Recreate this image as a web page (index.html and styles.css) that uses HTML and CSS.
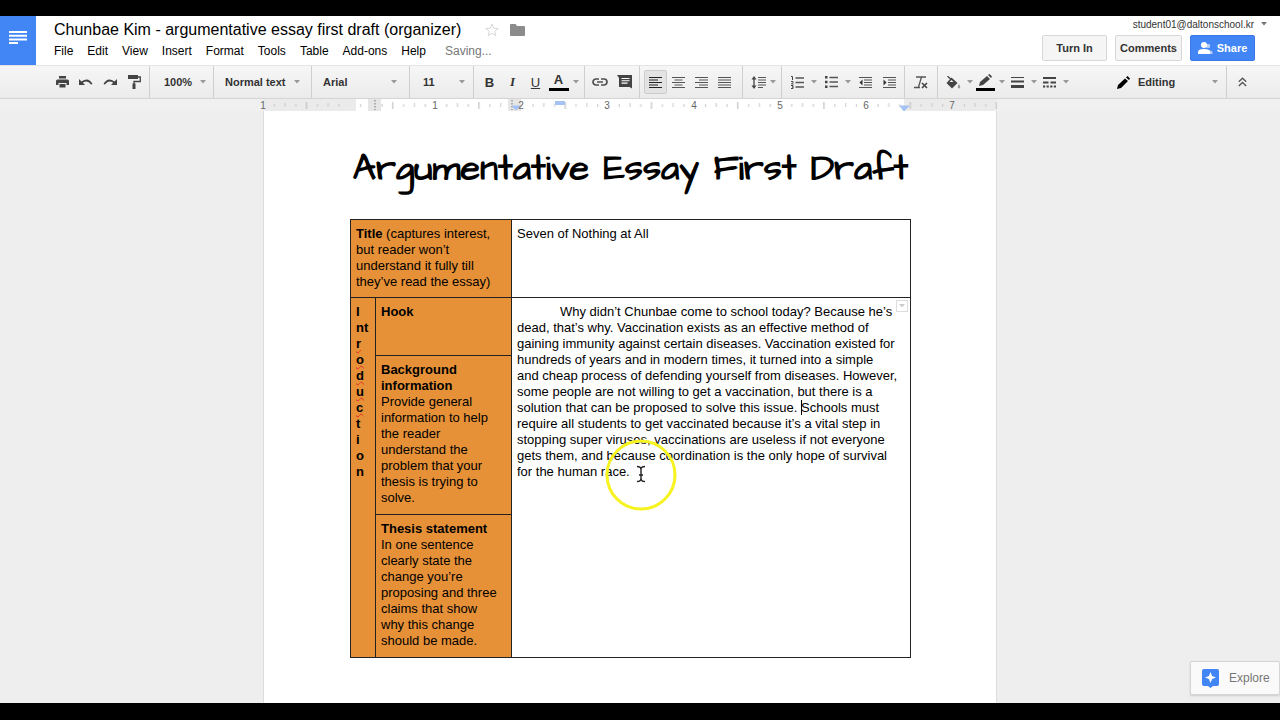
FILE: index.html
```html
<!DOCTYPE html>
<html lang="en">
<head>
<meta charset="utf-8">
<title>Chunbae Kim - argumentative essay first draft (organizer)</title>
<link rel="stylesheet" href="styles.css">
</head>
<body>
<svg class="defs" aria-hidden="true">
  <symbol id="caret" viewBox="0 0 6 4"><path d="M0 0h6L3 3.500z"/></symbol>
  <pattern id="ticks" width="86.250" height="12" patternUnits="userSpaceOnUse">
    <path d="M11.300 5v3M22 4v4M32.800 5v3M54.400 5v3M65.200 4v4M76 5v3" stroke="#c9c9c9"/>
    <path d="M43.500 3v7" stroke="#b5b5b5"/>
  </pattern>
</svg>
<div class="app">
  <header class="header">
    <a class="logo" href="#" aria-label="Docs home">
      <svg width="18" height="14" viewBox="0 0 18 14"><path d="M0 1h18M0 4.700h18M0 8.400h18M0 12.100h9" stroke="#fff" stroke-width="2"/></svg>
    </a>
    <div class="heading">
      <div class="title-row">
        <h1 class="doc-title">Chunbae Kim - argumentative essay first draft (organizer)</h1>
        <button class="plain star" aria-label="Star"><svg width="14" height="14" viewBox="0 0 14 14"><path d="M7 1l1.700 4.200 4.500.3-3.500 2.800 1.200 4.400L7 10.300l-3.900 2.400 1.200-4.400L.8 5.500l4.500-.3z" fill="none" stroke="#d8d8d8"/></svg></button>
        <button class="plain" aria-label="Folder"><svg width="15" height="12" viewBox="0 0 15 12"><path d="M0 1q0-1 1-1h4.500L7 2h7q1 0 1 1v8q0 1-1 1H1q-1 0-1-1z" fill="#8b8b8b"/></svg></button>
      </div>
      <nav class="menu">
        <button>File</button><button>Edit</button><button>View</button><button>Insert</button><button>Format</button><button>Tools</button><button>Table</button><button>Add-ons</button><button>Help</button>
        <span class="saving">Saving...</span>
      </nav>
    </div>
    <div class="account">
      <button class="plain email">student01@daltonschool.kr <svg class="caret" width="6" height="4"><use href="#caret"/></svg></button>
      <div class="actions">
        <button class="action turn">Turn In</button>
        <button class="action comments">Comments</button>
        <button class="action share"><svg width="15" height="12" viewBox="0 0 15 12"><circle cx="10" cy="4" r="2.300" fill="#b5cdf9"/><path d="M8 12V8.500q6-1 6.500 2V12z" fill="#b5cdf9"/><circle cx="6" cy="3" r="3" fill="#fff"/><path d="M0 12v-2q0-3 6-3t6 3v2z" fill="#fff"/></svg>Share</button>
      </div>
    </div>
  </header>

  <div class="toolbar" role="toolbar" aria-label="Formatting">
    <div class="group first">
      <button class="tool" aria-label="Print"><svg width="13" height="12" viewBox="0 0 13 12"><path d="M3 0h7v2.500H3zM1.500 3.500h10Q13 3.500 13 5v4h-2.500V7h-8v2H0V5q0-1.500 1.500-1.500zM3.500 8h6v3.500h-6z" fill="#444"/></svg></button>
      <button class="tool" aria-label="Undo"><svg width="14" height="8" viewBox="0 0 14 8"><path d="M0 1v6h6L3.800 4.800Q8.500 1.500 12 6.500l1.500-.5Q9.500-1.500 2.500 3.500z" fill="#444"/></svg></button>
      <button class="tool" aria-label="Redo"><svg width="14" height="8" viewBox="0 0 14 8"><path d="M14 1v6H8l2.200-2.200Q5.500 1.500 2 6.500L.5 6Q4.500-1.500 11.500 3.500z" fill="#444"/></svg></button>
      <button class="tool" aria-label="Paint format"><svg width="13" height="14" viewBox="0 0 13 14"><path d="M0 0h10v4H0z" fill="#444"/><path d="M10 2h2.300v4.500H6V9" fill="none" stroke="#444" stroke-width="1.300"/><path d="M4.500 8.500h3V14h-3z" fill="#444"/></svg></button>
    </div>
    <label class="group pick zoom"><select aria-label="Zoom"><option>100%</option></select><svg class="caret" width="6" height="4"><use href="#caret"/></svg></label>
    <label class="group pick style"><select aria-label="Styles"><option>Normal text</option></select><svg class="caret" width="6" height="4"><use href="#caret"/></svg></label>
    <label class="group pick font"><select aria-label="Font"><option>Arial</option></select><svg class="caret" width="6" height="4"><use href="#caret"/></svg></label>
    <label class="group pick size"><select aria-label="Font size"><option>11</option></select><svg class="caret" width="6" height="4"><use href="#caret"/></svg></label>
    <div class="group text">
      <button class="tool bold" aria-label="Bold">B</button>
      <button class="tool italic" aria-label="Italic">I</button>
      <button class="tool underline" aria-label="Underline">U</button>
      <button class="tool color" aria-label="Text color"><span class="swatch">A</span></button>
      <svg class="caret" width="6" height="4"><use href="#caret"/></svg>
    </div>
    <div class="group insert">
      <button class="tool" aria-label="Link"><svg width="16" height="8" viewBox="0 0 16 8"><path d="M7 1H4a3 3 0 000 6h3M9 1h3a3 3 0 010 6H9M5 4h6" fill="none" stroke="#505050" stroke-width="1.700"/></svg></button>
      <button class="tool" aria-label="Comment"><svg width="15" height="14" viewBox="0 0 15 14"><path d="M0 0h15v13.500L12.500 12H2V3z" fill="#444"/><path d="M4.500 3.500h8M4.500 5.800h8M4.500 8.100h6" stroke="#fff" stroke-width="1.100"/></svg></button>
    </div>
    <div class="group align">
      <button class="tool active" aria-label="Align left"><svg width="13" height="11" viewBox="0 0 13 11"><path d="M0 .5h13M0 3h9M0 5.500h13M0 8h9M0 10.500h13" stroke="#222" stroke-width="1.200"/></svg></button>
      <button class="tool" aria-label="Align center"><svg width="13" height="11" viewBox="0 0 13 11"><path d="M0 .5h13M2.500 3h8M0 5.500h13M2.500 8h8M0 10.500h13" stroke="#555" stroke-width="1.200"/></svg></button>
      <button class="tool" aria-label="Align right"><svg width="13" height="11" viewBox="0 0 13 11"><path d="M0 .5h13M4 3h9M0 5.500h13M4 8h9M0 10.500h13" stroke="#555" stroke-width="1.200"/></svg></button>
      <button class="tool" aria-label="Justify"><svg width="13" height="11" viewBox="0 0 13 11"><path d="M0 .5h13M0 3h13M0 5.500h13M0 8h13M0 10.500h13" stroke="#555" stroke-width="1.200"/></svg></button>
    </div>
    <div class="group spacing">
      <button class="tool" aria-label="Line spacing"><svg width="15" height="13" viewBox="0 0 15 13"><path d="M3 2v9" stroke="#444" stroke-width="1.300"/><path d="M.5 3.500L3 0l2.500 3.500zM.5 9.500L3 13l2.500-3.500z" fill="#444"/><path d="M7 1.500h8M7 4h8M7 6.500h8M7 9h8M7 11.500h5" stroke="#555" stroke-width="1.200"/></svg></button>
      <svg class="caret" width="6" height="4"><use href="#caret"/></svg>
    </div>
    <div class="group lists">
      <button class="tool" aria-label="Numbered list"><svg width="13" height="13" viewBox="0 0 13 13"><path d="M4.500 2H13M4.500 6.500H13M4.500 11H13" stroke="#555" stroke-width="1.300"/><path d="M0 .5h1.500V4M0 5.500h2v1L.5 8h2M0 9.500h2v3H0M1 11h1" fill="none" stroke="#444"/></svg></button>
      <svg class="caret" width="6" height="4"><use href="#caret"/></svg>
      <button class="tool second" aria-label="Bulleted list"><svg width="13" height="12" viewBox="0 0 13 12"><path d="M4.500 1.500H13M4.500 6H13M4.500 10.500H13" stroke="#555" stroke-width="1.300"/><path d="M0 0h2.500v2.500H0zM0 4.800h2.500v2.500H0zM0 9.500h2.500V12H0z" fill="#444"/></svg></button>
      <svg class="caret" width="6" height="4"><use href="#caret"/></svg>
      <button class="tool third" aria-label="Decrease indent"><svg width="13" height="11" viewBox="0 0 13 11"><path d="M0 .5h13M5 3h8M5 5.500h8M5 8h8M0 10.500h13" stroke="#555" stroke-width="1.200"/><path d="M3.500 2.500v6L.5 5.500z" fill="#333"/></svg></button>
      <button class="tool" aria-label="Increase indent"><svg width="13" height="11" viewBox="0 0 13 11"><path d="M0 .5h13M5 3h8M5 5.500h8M5 8h8M0 10.500h13" stroke="#555" stroke-width="1.200"/><path d="M.5 2.500v6l3-3z" fill="#333"/></svg></button>
    </div>
    <div class="group clear">
      <button class="tool" aria-label="Clear formatting"><svg width="14" height="13" viewBox="0 0 14 13"><path d="M2 1h10M7.500 1L4.500 11M0 11.500h6" fill="none" stroke="#555" stroke-width="1.300"/><path d="M8 7l5 5M13 7l-5 5" stroke="#444" stroke-width="1.600"/></svg></button>
    </div>
    <div class="group cells">
      <button class="tool" aria-label="Cell color"><svg width="15" height="13" viewBox="0 0 15 13"><path d="M1.500 0l4 4" stroke="#444" stroke-width="1.300"/><path d="M5.500 1.500L11.500 7 6 12.500.5 7z" fill="#444"/><path d="M3.500 6L5.500 4l2 2z" fill="#eee"/><path d="M13 8q2.500 3.800 0 4.500-2.500-.7 0-4.500z" fill="#999"/></svg></button>
      <svg class="caret" width="6" height="4"><use href="#caret"/></svg>
      <button class="tool border-color" aria-label="Border color"><svg width="19" height="17" viewBox="0 0 19 17"><path d="M3 12l1-4 7-6 3 3-7 6z" fill="#444"/><path d="M12 1l1.500-1L16 2.500 15 4z" fill="#444"/><path d="M0 14h19v3H0z" fill="#000"/></svg></button>
      <svg class="caret" width="6" height="4"><use href="#caret"/></svg>
      <button class="tool" aria-label="Border width"><svg width="13" height="11" viewBox="0 0 13 11"><path d="M0 .5h13" stroke="#444"/><path d="M0 4.500h13" stroke="#444" stroke-width="2"/><path d="M0 9.500h13" stroke="#444" stroke-width="3"/></svg></button>
      <svg class="caret" width="6" height="4"><use href="#caret"/></svg>
      <button class="tool" aria-label="Border dash"><svg width="13" height="11" viewBox="0 0 13 11"><path d="M0 1h13M0 5.500h5.500M7.500 5.500H13" stroke="#444" stroke-width="2"/><path d="M0 9.500h13" stroke="#444" stroke-width="2" stroke-dasharray="2.200 1.400"/></svg></button>
      <svg class="caret" width="6" height="4"><use href="#caret"/></svg>
    </div>
    <label class="group pick mode"><svg width="13" height="13" viewBox="0 0 13 13"><path d="M0 13l1-4 7-6.500L11 5l-7 7zM9 1.500L10.500 0 13 2.500 12 4z" fill="#000"/></svg><select aria-label="Mode"><option>Editing</option></select><svg class="caret" width="6" height="4"><use href="#caret"/></svg></label>
    <div class="group last">
      <button class="tool" aria-label="Hide menus"><svg width="9" height="10" viewBox="0 0 9 10"><path d="M.8 4.700l3.700-3.500 3.700 3.500M.8 9l3.700-3.500L8.200 9" fill="none" stroke="#555" stroke-width="1.300"/></svg></button>
    </div>
  </div>

  <div class="ruler">
    <svg class="scale" width="734" height="12" viewBox="0 0 734 12">
      <path d="M0 0h734v12H0z" fill="#ebebeb"/>
      <path d="M93 0h548v12H93z" fill="#fff"/>
      <path d="M0 0h734v12H0z" fill="url(#ticks)"/>
      <path d="M105 0h13v12h-13zM245 0h13v12h-13z" fill="#e6e6e6"/>
      <path d="M112 1v10M249 1v10" stroke="#777" stroke-dasharray="1.500 1.500"/>
      <path d="M249 7h8l-4 4zM637 7h9l-5 5z" fill="#a4c2f4" stroke="#a4c2f4"/>
      <path d="M292 2h10v4h-10z" fill="#a4c2f4"/>
      <g class="numbers"><text x="0" y="10">1</text><text x="172" y="10">1</text><text x="258" y="10">2</text><text x="344" y="10">3</text><text x="431" y="10">4</text><text x="517" y="10">5</text><text x="603" y="10">6</text><text x="689" y="10">7</text></g>
    </svg>
  </div>

  <main class="canvas">
    <article class="page">
      <h2 class="essay-title">Argumentative Essay First Draft</h2>
      <table class="organizer">
        <colgroup><col class="c1"><col class="c2"><col></colgroup>
        <tr class="r1">
          <td class="label" colspan="2"><b>Title</b> (captures interest,<br>but reader won’t<br>understand it fully till<br>they’ve read the essay)</td>
          <td>Seven of Nothing at All</td>
        </tr>
        <tr class="r2">
          <td class="label" rowspan="3"><b>I<br>nt<br><span class="spell">r</span><br><span class="spell">o</span><br><span class="spell">d</span><br><span class="spell">u</span><br><span class="spell">c</span><br>t<br>i<br>o<br>n</b></td>
          <td class="label"><b>Hook</b></td>
          <td class="essay" rowspan="3">
            <button class="cell-menu" aria-label="Cell menu"><svg class="caret" width="6" height="4"><use href="#caret"/></svg></button>
            <p>Why didn’t Chunbae come to school today? Because he’s<br>dead, that’s why. Vaccination exists as an effective method of<br>gaining immunity against certain diseases. Vaccination existed for<br>hundreds of years and in modern times, it turned into a simple<br>and cheap process of defending yourself from diseases. However,<br>some people are not willing to get a vaccination, but there is a<br>solution that can be proposed to solve this issue. <span class="cursor"></span>Schools must<br>require all students to get vaccinated because it’s a vital step in<br>stopping super viruses, vaccinations are useless if not everyone<br>gets them, and because coordination is the only hope of survival<br>for the human race.</p>
            <svg class="pointer" width="72" height="72" viewBox="0 0 72 72"><circle cx="36" cy="36" r="34" fill="none" stroke="#f7f321" stroke-width="3"/><path d="M32 27.500q4 0 4 3v9q0 3-4 3M40 27.500q-4 0-4 3v9q0 3 4 3M34 36h4" fill="none" stroke="#222" stroke-width="1.400"/></svg>
          </td>
        </tr>
        <tr class="r3"><td class="label"><b>Background<br>information</b><br>Provide general<br>information to help<br>the reader<br>understand the<br>problem that your<br>thesis is trying to<br>solve.</td></tr>
        <tr class="r4"><td class="label"><b>Thesis statement</b><br>In one sentence<br>clearly state the<br>change you’re<br>proposing and three<br>claims that show<br>why this change<br>should be made.</td></tr>
      </table>
    </article>
    <button class="explore"><svg width="17" height="19" viewBox="0 0 17 19"><path d="M2 0h13q2 0 2 2v13q0 2-2 2h-4l-2.500 2L6 17H2q-2 0-2-2V2q0-2 2-2z" fill="#4285f4"/><path d="M8.500 3l1.600 4L14 8.500 10.100 10l-1.600 4-1.600-4L3 8.500 6.900 7z" fill="#fff"/></svg>Explore</button>
  </main>
</div>
</body>
</html>
```
FILE: styles.css
```css
* { box-sizing: border-box; }
body {
  margin: 0;
  height: 100vh;
  padding: 16px 0 17px;
  background: #000;
  color: #000;
  font-family: "Liberation Sans", Arial, sans-serif;
}
button, select { font: inherit; color: inherit; border: 0; background: none; padding: 0; margin: 0; }
h1, h2, p { margin: 0; font-weight: normal; }
svg { display: block; flex: none; }
.defs { position: absolute; width: 0; height: 0; }
.app { display: flex; flex-direction: column; height: 100%; overflow: hidden; background: #eee; }

.header { display: flex; flex: none; height: 49px; background: #fff; }
.logo { display: flex; align-items: center; justify-content: center; width: 36px; padding-bottom: 6px; background: #4285f4; }
.heading { flex: 1; padding: 3px 0 0 18px; }
.title-row { display: flex; align-items: center; height: 22px; }
.doc-title { font-size: 16px; line-height: 22px; white-space: nowrap; }
.star { margin: 0 11px 0 24px; }
.menu { display: flex; gap: 14px; font-size: 12px; line-height: 20px; }
.saving { margin-left: 5px; color: #777; }
.account { display: flex; flex-direction: column; align-items: flex-end; padding-right: 13px; }
.email { display: flex; align-items: center; gap: 7px; height: 16px; margin-bottom: 3px; font-size: 10px; color: #333; }
.actions { display: flex; gap: 8px; padding-right: 12px; }
.action { height: 26px; border: 1px solid #d8d8d8; border-radius: 2px; background: #f5f5f5; color: #333; font-size: 11px; font-weight: bold; }
.turn, .share { width: 65px; }
.comments { width: 67px; }
.action.share { display: flex; align-items: center; justify-content: center; gap: 4px; border-color: #3b78e7; background: #4285f4; color: #fff; }

.toolbar { display: flex; flex: none; height: 34px; border-top: 1px solid #e4e4e4; border-bottom: 1px solid #d4d4d4; background: linear-gradient(#f6f6f6, #ebebeb); color: #333; }
.group { display: flex; align-items: center; flex: none; border-right: 1px solid #cfcfcf; }
.caret { fill: #999; }
.email .caret { fill: #777; }
.tool { display: flex; align-items: center; justify-content: center; flex: none; width: 24px; height: 24px; font-size: 13px; }
.active { border: 1px solid #ccc; border-radius: 2px; background: #e3e3e3; }
.first { width: 150px; padding-left: 50px; }
.pick { justify-content: space-between; font-size: 11px; font-weight: bold; }
.pick select { appearance: none; outline: 0; }
.zoom { width: 64px; padding: 0 7px 0 14px; }
.style { width: 98px; padding: 0 11px; }
.font { width: 98px; padding: 0 12px 0 11px; }
.size { width: 64px; padding: 0 8px 0 13px; }
.text { width: 111px; padding-left: 3px; }
.bold { font-weight: bold; }
.italic { font-family: "Liberation Serif", serif; font-style: italic; font-weight: bold; }
.underline { text-decoration: underline; }
.swatch { width: 20px; height: 18px; border-bottom: 3px solid #000; line-height: 14px; font-weight: bold; }
.text .tool, .align .tool { width: 23px; }
.text { padding-left: 4px; }
.text .caret { margin-left: 3px; }
.insert { width: 55px; padding-left: 3px; }
.align { width: 103px; padding-left: 4px; }
.spacing { width: 39px; padding-left: 3px; }
.lists { width: 123px; padding-left: 3px; }
.lists .caret, .cells .caret { margin-left: 2px; }
.second { margin-left: 2px; }
.third { margin-left: 2px; }
.clear { width: 33px; padding-left: 4px; }
.cells { padding-left: 3px; border: 0; }
.mode { flex: 1; padding: 0 8px 0 48px; gap: 8px; }
.mode select { flex: 1; }
.last { width: 53px; padding-left: 3px; border: 0; }

.ruler { display: flex; flex: none; justify-content: center; height: 12px; padding-right: 20px; background: #f0f0f0; }
.scale { overflow: visible; }
.numbers { font-size: 10px; fill: #666; text-anchor: middle; }

.canvas { position: relative; display: flex; flex: 1; justify-content: center; align-items: stretch; min-height: 0; padding-right: 20px; }
.page { width: 734px; padding: 32px 85px 0 86px; border: 1px solid #ddd; border-width: 0 1px; background: #fff; }
.essay-title { margin-bottom: 24px; font: bold 36px/52px "Architects Daughter", Lato, sans-serif; text-align: center; white-space: nowrap; }
.organizer { width: 100%; border-collapse: collapse; table-layout: fixed; font-size: 13px; line-height: 16px; }
.c1 { width: 25px; }
.c2 { width: 136px; }
.organizer td { padding: 6px 0 6px 5px; border: 1px solid #222; vertical-align: top; white-space: nowrap; }
.label { background: #e69138; }
.r1 { height: 78px; }
.r2 { height: 58px; }
.r3 { height: 159px; }
.r4 { height: 143px; }
.spell { text-decoration: underline wavy #e03020 1px; }
.organizer .essay { position: relative; }
.essay p { text-indent: 43px; }
.cursor { position: relative; }
.cursor::before { content: ""; position: absolute; top: 0; left: 0; height: 15px; border-left: 1px solid #000; }
.cell-menu { position: absolute; top: 2px; right: 2px; display: flex; align-items: center; justify-content: center; width: 12px; height: 12px; border: 1px solid #ddd; background: #fff; }
.cell-menu .caret { fill: #ccc; }
.pointer { position: absolute; top: 141px; left: 93px; }
.explore { position: absolute; right: 0; bottom: 8px; display: flex; align-items: center; gap: 10px; width: 90px; height: 34px; padding-left: 11px; border: 1px solid #d5d5d5; border-radius: 2px; background: #fafafa; box-shadow: 0 1px 2px #ccc; color: #777; font-size: 12px; }
```
